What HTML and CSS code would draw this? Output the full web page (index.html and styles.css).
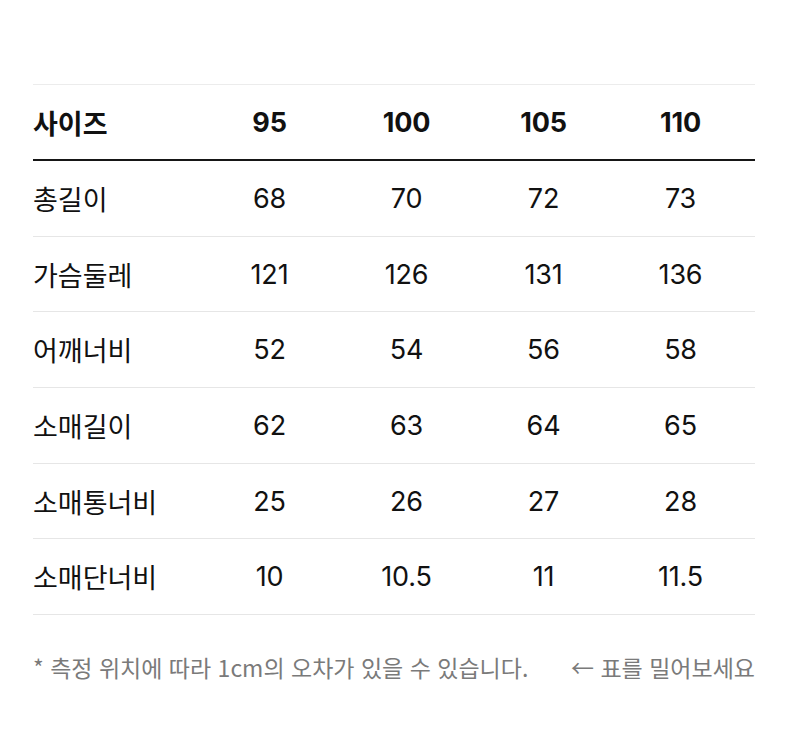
FILE: index.html
```html
<!DOCTYPE html>
<html lang="ko">
<head>
<meta charset="utf-8">
<link rel="stylesheet" href="styles.css">
</head>
<body>
<div class="page">
  <div class="table">
    <div class="row head">
      <div class="label">사이즈</div>
      <div class="cell">95</div>
      <div class="cell">100</div>
      <div class="cell">105</div>
      <div class="cell">110</div>
    </div>
    <div class="row">
      <div class="label">총길이</div>
      <div class="cell">68</div>
      <div class="cell">70</div>
      <div class="cell">72</div>
      <div class="cell">73</div>
    </div>
    <div class="row">
      <div class="label">가슴둘레</div>
      <div class="cell">121</div>
      <div class="cell">126</div>
      <div class="cell">131</div>
      <div class="cell">136</div>
    </div>
    <div class="row">
      <div class="label">어깨너비</div>
      <div class="cell">52</div>
      <div class="cell">54</div>
      <div class="cell">56</div>
      <div class="cell">58</div>
    </div>
    <div class="row">
      <div class="label">소매길이</div>
      <div class="cell">62</div>
      <div class="cell">63</div>
      <div class="cell">64</div>
      <div class="cell">65</div>
    </div>
    <div class="row">
      <div class="label">소매통너비</div>
      <div class="cell">25</div>
      <div class="cell">26</div>
      <div class="cell">27</div>
      <div class="cell">28</div>
    </div>
    <div class="row">
      <div class="label">소매단너비</div>
      <div class="cell">10</div>
      <div class="cell">10.5</div>
      <div class="cell">11</div>
      <div class="cell">11.5</div>
    </div>
  </div>
  <div class="footer">
    <span class="note">* 측정 위치에 따라 1cm의 오차가 있을 수 있습니다.</span>
    <span class="hint">← 표를 밀어보세요</span>
  </div>
</div>
</body>
</html>
```
FILE: styles.css
```css
html, body {
  margin: 0;
  padding: 0;
  background: #ffffff;
}
body {
  font-family: "Inter", "Noto Sans CJK KR", sans-serif;
  color: #111111;
}
.page {
  width: 722px;
  padding: 84px 0 0 33px;
}
.table {
  border-top: 1px solid #ececec;
}
.row {
  display: grid;
  grid-template-columns: 168px 137px 137px 137px 137px 1fr;
  align-items: center;
  height: 75.7px;
  box-sizing: border-box;
  border-bottom: 1px solid #e6e6e6;
  font-size: 27px;
}
.row.head {
  height: 76px;
  border-bottom: 2px solid #161616;
  font-weight: 700;
}
.label {
  text-align: left;
  font-family: "Noto Sans CJK KR", sans-serif;
  font-size: 27px;
}
.row:not(.head) .label {
  font-weight: 400;
}
.cell {
  text-align: center;
  letter-spacing: -0.2px;
}
.footer {
  display: flex;
  justify-content: space-between;
  align-items: center;
  margin-top: 35px;
  font-size: 23px;
  color: #7a7a7a;
  font-family: "Noto Sans CJK KR", sans-serif;
  letter-spacing: 0;
}
```
